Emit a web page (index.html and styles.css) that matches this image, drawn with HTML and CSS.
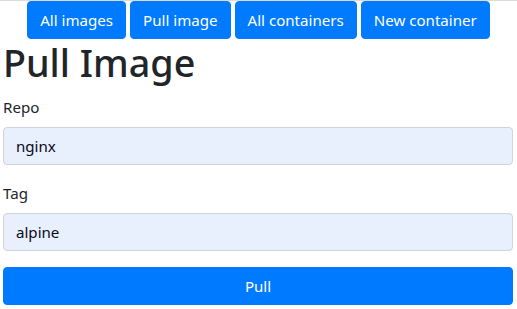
FILE: index.html
```html
<!DOCTYPE html>
<html>
<head>
<meta charset="utf-8">
<link rel="stylesheet" href="styles.css">
</head>
<body>
<div class="topline"></div>
<nav class="nav">
  <a class="btn">All images</a>
  <a class="btn">Pull image</a>
  <a class="btn">All containers</a>
  <a class="btn">New container</a>
</nav>
<main class="page">
  <h1 class="title">Pull Image</h1>
  <div class="group">
    <label class="label">Repo</label>
    <div class="input">nginx</div>
  </div>
  <div class="group">
    <label class="label">Tag</label>
    <div class="input">alpine</div>
  </div>
  <button class="btn btn-block">Pull</button>
</main>
</body>
</html>
```
FILE: styles.css
```css
* { box-sizing: border-box; }
html, body {
  margin: 0;
  padding: 0;
  background: #fff;
}
body {
  font-family: "Noto Sans", "Open Sans", sans-serif;
  font-size: 15.1px;
  line-height: 24px;
  color: #212529;
}
.topline {
  height: 1px;
  background: #dcdcdc;
}
.nav {
  display: flex;
  justify-content: center;
  gap: 4px;
}
.btn {
  display: inline-block;
  background: #007bff;
  color: #fff;
  border: 1px solid #007bff;
  border-radius: 4px;
  padding: 6px 12px;
  font-family: inherit;
  font-size: 15.1px;
  line-height: 24px;
  text-align: center;
  white-space: nowrap;
}
.page {
  padding: 0 4px 0 3px;
}
.title {
  margin: 0 0 8px 0;
  font-size: 37.7px;
  font-weight: 500;
  line-height: 48px;
}
.group {
  margin-bottom: 16px;
}
.label {
  display: inline-block;
  margin-bottom: 8px;
}
.input {
  height: 38px;
  padding: 6px 12px;
  border: 1px solid #ced4da;
  border-radius: 4px;
  background: #e8f0fe;
  color: #0a0a1a;
  line-height: 24px;
}
.btn-block {
  display: block;
  width: 100%;
}
```
